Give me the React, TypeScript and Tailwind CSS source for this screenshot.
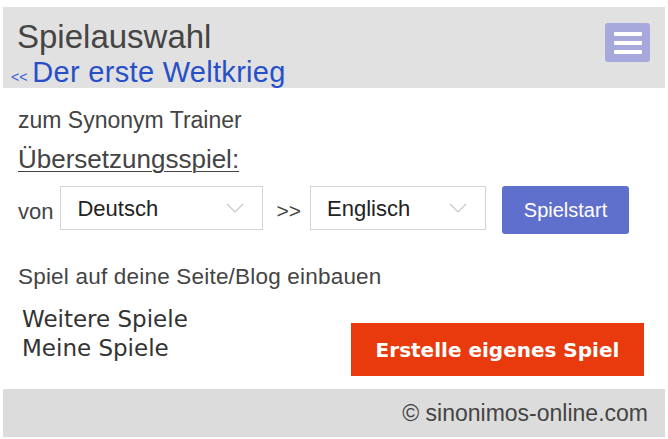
import React from 'react';

function Chevron() {
  return (
    <svg width="18" height="10" viewBox="0 0 18 10" className="text-[#c8c8c8]">
      <path d="M1 1 L9 9 L17 1" fill="none" stroke="currentColor" strokeWidth="1.2" />
    </svg>
  );
}

function LangSelect({ label, width }: { label: string; width: string }) {
  return (
    <div className={`${width} h-[44px] border border-[#d4d4d4] bg-white flex items-center justify-between pl-4 pr-[18px]`}>
      <span className="text-[22px] text-[#222]">{label}</span>
      <Chevron />
    </div>
  );
}

export default function App() {
  return (
    <div className="w-[668px] h-[439px] bg-white pt-[7px] px-[3px] font-['Liberation_Sans',Arial,sans-serif] text-[#444]">
      <div className="h-[81px] bg-[#e1e1e1] flex justify-between pl-[14px] pr-[15px]">
        <div className="flex flex-col">
          <div className="text-[33px] leading-[36px] mt-[12px] text-[#454545]">Spielauswahl</div>
          <div className="flex items-baseline -ml-[6px] mt-[2px]">
            <span className="text-[14px] text-[#3a5fd0] mr-[5px]">&lt;&lt;</span>
            <span className="text-[29px] leading-[30px] text-[#2750c8] tracking-[0.3px]">Der erste Weltkrieg</span>
          </div>
        </div>
        <div className="mt-[16px] w-[45px] h-[39px] rounded-[3px] bg-[#a7a9dd] flex flex-col items-center justify-center gap-[5px]">
          <div className="w-[28px] h-[4px] bg-white rounded-[1px]" />
          <div className="w-[28px] h-[4px] bg-white rounded-[1px]" />
          <div className="w-[28px] h-[4px] bg-white rounded-[1px]" />
        </div>
      </div>

      <div className="pl-[15px] pt-[19px]">
        <div className="text-[23px] leading-[26px]">zum Synonym Trainer</div>
        <div className="mt-[11px] text-[26px] leading-[30px] underline underline-offset-[3px] decoration-1">Übersetzungsspiel:</div>
        <div className="mt-[12px] flex items-start">
          <span className="text-[22px] mt-[9px] mr-[7px]">von</span>
          <LangSelect label="Deutsch" width="w-[203px]" />
          <span className="text-[21px] mt-[9px] ml-[13px] mr-[9px]">&gt;&gt;</span>
          <LangSelect label="Englisch" width="w-[176px]" />
          <button className="ml-[16px] w-[127px] h-[48px] rounded-[3px] bg-[#5f6fcc] text-white text-[20px]">Spielstart</button>
        </div>
        <div className="mt-[30px] text-[22.5px] leading-[26px] tracking-[0.2px]">Spiel auf deine Seite/Blog einbauen</div>
        <div className="mt-[15px] flex justify-between pr-[21px]">
          <div className="pl-[4px] font-['DejaVu_Sans',Verdana,sans-serif] text-[23px] leading-[29px] text-[#333]">
            <div>Weitere Spiele</div>
            <div>Meine Spiele</div>
          </div>
          <button className="mt-[18px] w-[293px] h-[53px] bg-[#e83a0c] text-white font-bold font-['DejaVu_Sans',Verdana,sans-serif] text-[20px]">Erstelle eigenes Spiel</button>
        </div>
      </div>

      <div className="mt-[13px] h-[48px] bg-[#dcdcdc] flex items-center justify-end pr-[17px] text-[23px] text-[#444]">
        © sinonimos-online.com
      </div>
    </div>
  );
}
